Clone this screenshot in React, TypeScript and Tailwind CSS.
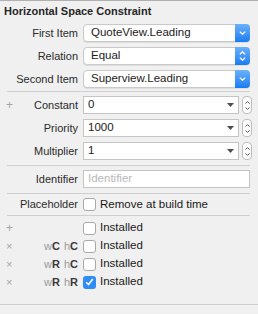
import React from "react";

const font = { fontFamily: '"Liberation Sans", Arial, sans-serif' };

const Chevron = ({ up }: { up?: boolean }) => (
  <svg width="7" height="4" viewBox="0 0 7 4" className="block">
    <path
      d={up ? "M0.8 3.4 L3.5 0.8 L6.2 3.4" : "M0.8 0.6 L3.5 3.2 L6.2 0.6"}
      fill="none"
      stroke="currentColor"
      strokeWidth="1.3"
    />
  </svg>
);

const Row = ({
  gutter,
  label,
  children,
  className = "",
}: {
  gutter?: React.ReactNode;
  label?: React.ReactNode;
  children: React.ReactNode;
  className?: string;
}) => (
  <div className={`flex items-center ${className}`}>
    <div className="w-[16px] shrink-0 pl-[6px] text-[12px] leading-none text-[#a6a6a6]">{gutter}</div>
    <div className="w-[67px] shrink-0 pr-[5px] text-right text-[11px] text-[#2b2b2b]">{label}</div>
    {children}
  </div>
);

const Popup = ({ value, updown }: { value: string; updown?: boolean }) => (
  <div className="flex h-[18px] w-[167px] items-center rounded-[4px] border border-[#c9c9c9] bg-white shadow-[0_1px_0_rgba(0,0,0,0.08)]">
    <div className="flex-1 pl-[7px] text-[11.5px] leading-none text-[#1a1a1a]">{value}</div>
    <div className="-mr-px -my-px flex h-[18px] w-[15px] flex-col items-center justify-center gap-[2px] rounded-r-[4px] bg-gradient-to-b from-[#69b1fa] to-[#167cf2] text-white">
      {updown ? (
        <>
          <Chevron up />
          <Chevron />
        </>
      ) : (
        <Chevron />
      )}
    </div>
  </div>
);

const Combo = ({ value }: { value: string }) => (
  <div className="flex items-center gap-[3px]">
    <div className="flex h-[18px] w-[156px] items-center border border-[#c4c4c4] bg-white">
      <div className="flex-1 pl-[4px] text-[11.5px] leading-none text-[#1a1a1a]">{value}</div>
      <svg width="7" height="4" viewBox="0 0 7 4" className="mr-[4px]">
        <path d="M0 0 H7 L3.5 4 Z" fill="#4d4d4d" />
      </svg>
    </div>
    <div className="flex h-[18px] w-[10px] flex-col items-center justify-center gap-[3px] rounded-[4px] border border-[#bdbdbd] bg-white text-[#555]">
      <svg width="5" height="3" viewBox="0 0 5 3">
        <path d="M0.5 2.6 L2.5 0.6 L4.5 2.6" fill="none" stroke="currentColor" strokeWidth="1" />
      </svg>
      <svg width="5" height="3" viewBox="0 0 5 3">
        <path d="M0.5 0.4 L2.5 2.4 L4.5 0.4" fill="none" stroke="currentColor" strokeWidth="1" />
      </svg>
    </div>
  </div>
);

const Check = ({ checked }: { checked?: boolean }) =>
  checked ? (
    <div className="flex h-[13px] w-[13px] items-center justify-center rounded-[3px] bg-[#2f8cf5]">
      <svg width="9" height="8" viewBox="0 0 9 8">
        <path d="M1.2 4.2 L3.5 6.5 L7.8 1" fill="none" stroke="white" strokeWidth="1.6" />
      </svg>
    </div>
  ) : (
    <div className="h-[13px] w-[13px] rounded-[3px] border border-[#a8a8a8] bg-white" />
  );

const Sep = ({ full }: { full?: boolean }) => (
  <div className={`h-px bg-[#cfcfcf] ${full ? "" : "ml-[7px] mr-[8px]"}`} />
);

const Size = ({ w, h }: { w: string; h: string }) => (
  <span className="text-[11px]">
    <span className="text-[#9a9a9a]">w</span>
    <span className="font-semibold text-[#3a3a3a]">{w}</span>
    <span className="ml-[4px] text-[#9a9a9a]">h</span>
    <span className="font-semibold text-[#3a3a3a]">{h}</span>
  </span>
);

const Cross = () => <span className="text-[11px]">×</span>;

const CheckLabel = ({ text, checked }: { text: string; checked?: boolean }) => (
  <div className="flex items-center gap-[4px]">
    <Check checked={checked} />
    <span className="text-[11.5px] text-[#1a1a1a]">{text}</span>
  </div>
);

const sizeRows = [
  { g: "+", s: null, c: false },
  { g: <Cross />, s: <Size w="C" h="C" />, c: false },
  { g: <Cross />, s: <Size w="R" h="C" />, c: false },
  { g: <Cross />, s: <Size w="R" h="R" />, c: true },
];

export default function App() {
  return (
    <div style={font} className="h-[314px] w-[258px] overflow-hidden border-t border-[#b0b0b0] bg-[#f0f0f0]">
      <div className="pl-[4px] pt-[3px] text-[11px] font-bold leading-[14px] text-[#262626]">
        Horizontal Space Constraint
      </div>

      <div className="mt-[6px] flex flex-col gap-[5px]">
        <Row label="First Item">
          <Popup value="QuoteView.Leading" />
        </Row>
        <Row label="Relation">
          <Popup value="Equal" updown />
        </Row>
        <Row label="Second Item">
          <Popup value="Superview.Leading" />
        </Row>
      </div>

      <div className="mt-[3px]">
        <Sep />
      </div>

      <div className="mt-[4px] flex flex-col gap-[5px]">
        <Row label="Constant" gutter="+">
          <Combo value="0" />
        </Row>
        <Row label="Priority">
          <Combo value="1000" />
        </Row>
        <Row label="Multiplier">
          <Combo value="1" />
        </Row>
      </div>

      <div className="mt-[5px]">
        <Sep />
      </div>

      <Row label="Identifier" className="mt-[4px]">
        <div className="flex h-[18px] w-[167px] items-center border border-[#c4c4c4] bg-white pl-[4px] text-[11.5px] text-[#b8b8b8]">
          Identifier
        </div>
      </Row>

      <div className="mt-[5px]">
        <Sep />
      </div>

      <Row label="Placeholder" className="h-[21px]">
        <CheckLabel text="Remove at build time" />
      </Row>

      <Sep />

      <div className="mt-[3px] flex flex-col">
        {sizeRows.map((r, i) => (
          <Row key={i} label={r.s} gutter={r.g} className="h-[18px]">
            <CheckLabel text="Installed" checked={r.c} />
          </Row>
        ))}
      </div>

      <div className="mt-[13px]">
        <Sep full />
      </div>
    </div>
  );
}
